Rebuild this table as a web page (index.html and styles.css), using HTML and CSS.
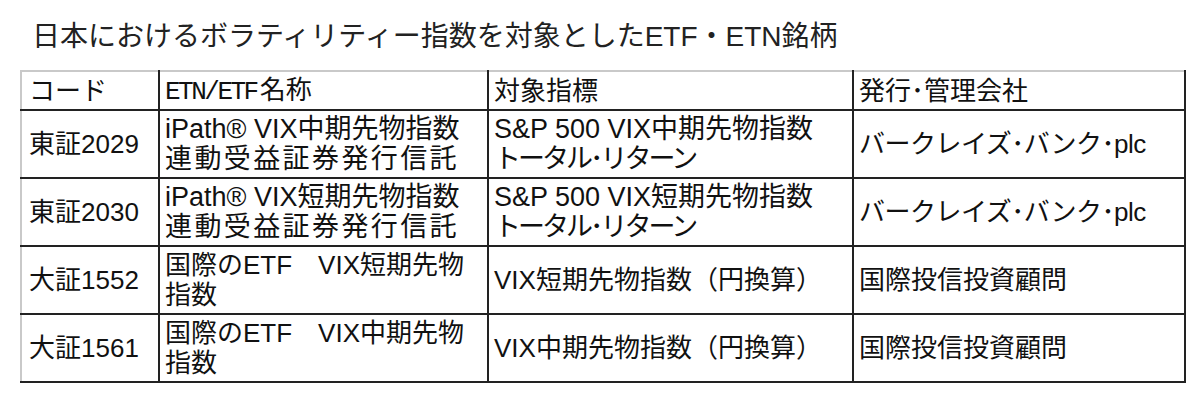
FILE: index.html
```html
<!DOCTYPE html>
<html lang="ja">
<head>
<meta charset="utf-8">
<title>ボラティリティー指数ETF・ETN銘柄</title>
<link rel="stylesheet" href="styles.css">
</head>
<body>
<h1 class="title">日本におけるボラティリティー指数を対象としたETF・ETN銘柄</h1>
<table class="etf">
  <colgroup>
    <col class="c-code">
    <col class="c-name">
    <col class="c-index">
    <col class="c-issuer">
  </colgroup>
  <tr class="head">
    <td>コード</td>
    <td><span class="narrow">ETN/ETF</span>名称</td>
    <td>対象指標</td>
    <td>発行･管理会社</td>
  </tr>
  <tr class="row">
    <td>東証2029</td>
    <td class="big">iPath® VIX中期先物指数<br><span class="wide">連動受益証券発行信託</span></td>
    <td class="big">S&amp;P 500 VIX中期先物指数<br><span class="kana">トータル･リターン</span></td>
    <td class="tight">バークレイズ･バンク･plc</td>
  </tr>
  <tr class="row">
    <td>東証2030</td>
    <td class="big">iPath® VIX短期先物指数<br><span class="wide">連動受益証券発行信託</span></td>
    <td class="big">S&amp;P 500 VIX短期先物指数<br><span class="kana">トータル･リターン</span></td>
    <td class="tight">バークレイズ･バンク･plc</td>
  </tr>
  <tr class="row">
    <td>大証1552</td>
    <td>国際のETF　VIX短期先物<br>指数</td>
    <td>VIX短期先物指数（円換算）</td>
    <td>国際投信投資顧問</td>
  </tr>
  <tr class="row">
    <td>大証1561</td>
    <td>国際のETF　VIX中期先物<br>指数</td>
    <td>VIX中期先物指数（円換算）</td>
    <td>国際投信投資顧問</td>
  </tr>
</table>
</body>
</html>
```
FILE: styles.css
```css
html, body {
  margin: 0;
  padding: 0;
  background: #ffffff;
}

body {
  color: #1a1a1a;
  font-family: "Liberation Sans", "Noto Sans CJK JP", sans-serif;
}

.title {
  margin: 0;
  padding: 20px 0 0 32px;
  height: 52px;
  box-sizing: border-box;
  font-size: 28px;
  font-weight: normal;
  line-height: 34px;
  color: #222222;
  font-family: "Liberation Sans", "Noto Sans CJK JP", sans-serif;
}

.etf {
  margin: 18px 0 0 20px;
  width: 1164px;
  border-collapse: collapse;
  table-layout: fixed;
  border-top: 2px solid #c9c9c9;
  border-left: 2px solid #c9c9c9;
  border-right: 2px solid #222222;
  border-bottom: 2px solid #333333;
}

.c-code { width: 138px; }
.c-name { width: 329px; }
.c-index { width: 365px; }
.c-issuer { width: 332px; }

.etf td {
  border: 2px solid #222222;
  padding: 0 0 0 5px;
  font-size: 26px;
  line-height: 30px;
  vertical-align: middle;
  white-space: nowrap;
  overflow: hidden;
  color: #111111;
}

.etf tr:first-child td {
  border-top-color: #c9c9c9;
}

.etf td:first-child {
  border-left-color: #c9c9c9;
  padding-left: 7px;
}

.etf td.big {
  font-size: 27px;
}

.etf td.tight {
  letter-spacing: -0.5px;
}

.narrow {
  font-family: "Liberation Mono", monospace;
  letter-spacing: -2.5px;
  margin-right: 3px;
}

.wide {
  letter-spacing: 2.4px;
}

.kana {
  letter-spacing: -3px;
}

.head td {
  height: 37px;
}

.row td {
  height: 66px;
}
```
